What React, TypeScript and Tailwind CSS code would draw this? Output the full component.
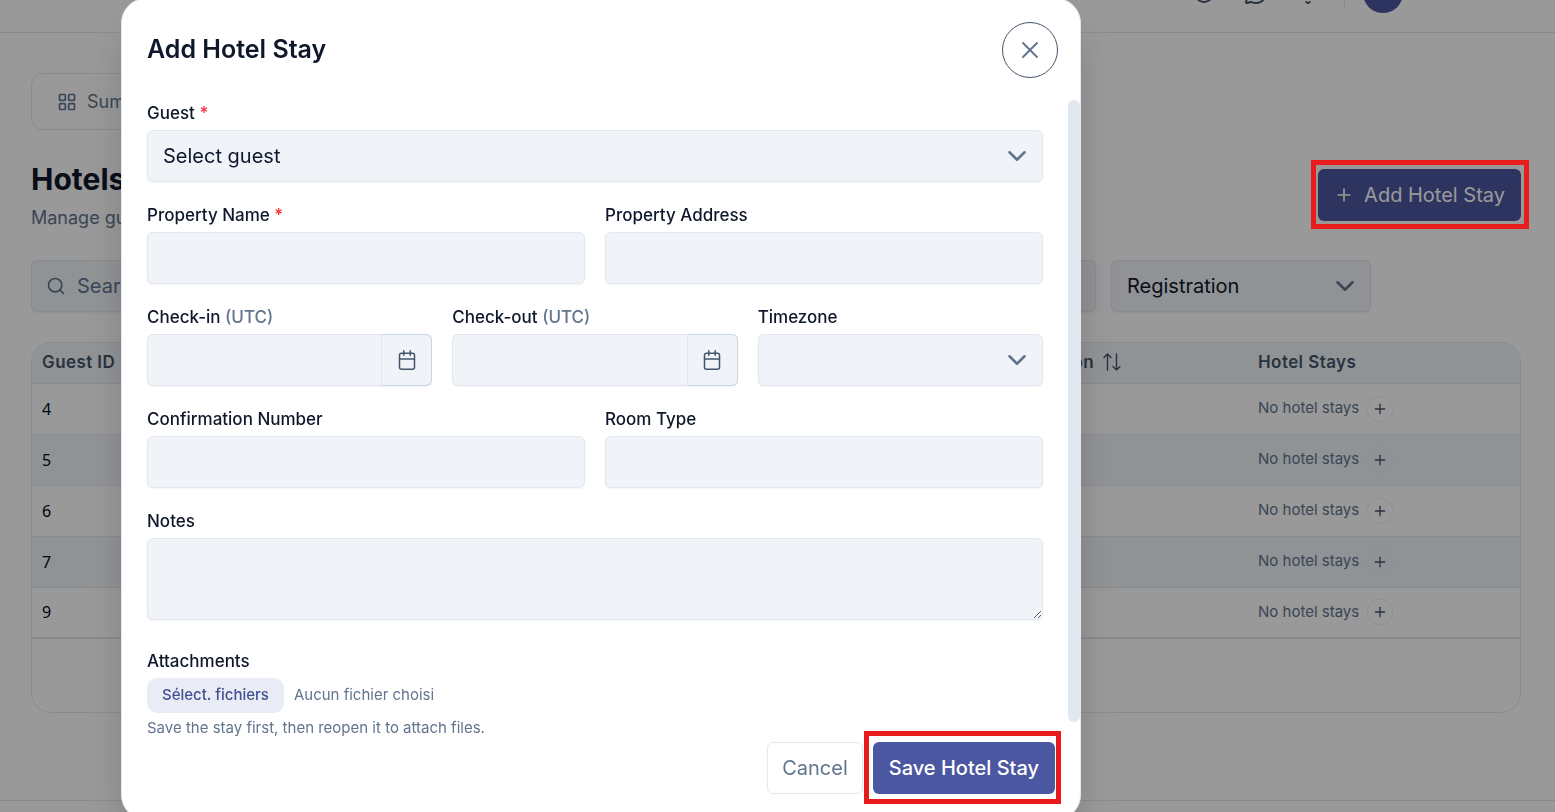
import { useState } from "react";
import type { ReactNode } from "react";
import { Bell, LayoutGrid, MessageCircle, Moon, Plus, Search, X } from "lucide-react";

const guestIds = [4, 5, 6, 7, 9];

const controlClass =
  "w-full rounded-md border border-slate-200 bg-[#f0f3f8] px-[15px] text-xl text-slate-900 shadow-xs outline-none";

function CalendarIcon() {
  return (
    <svg
      className="size-5"
      viewBox="0 0 20 20"
      fill="none"
      stroke="currentColor"
      strokeWidth={1.5}
      strokeLinecap="round"
      strokeLinejoin="round"
      aria-hidden="true"
    >
      <rect x="2.5" y="3.2" width="15" height="16" rx="2" />
      <path d="M6.8 .8v4.4M13.2 .8v4.4M2.5 9h15" />
    </svg>
  );
}

function SortIcon() {
  return (
    <svg
      className="size-5"
      viewBox="0 0 20 20"
      fill="none"
      stroke="currentColor"
      strokeWidth={1.4}
      strokeLinecap="round"
      strokeLinejoin="round"
      aria-hidden="true"
    >
      <path d="M5.5 17V1M2 4.5 5.5 1 9 4.5M14.5 1v16M11 13.500l3.500 3.500 3.500-3.500" />
    </svg>
  );
}

function Field({
  id,
  label,
  required,
  hint,
  children,
}: {
  id: string;
  label: string;
  required?: boolean;
  hint?: string;
  children: ReactNode;
}) {
  return (
    <div className="flex min-w-0 flex-col gap-[3px]">
      <label htmlFor={id} className="text-[17px] leading-[27px] font-medium text-slate-900">
        {label}
        {required && <span className="text-red-500"> *</span>}
        {hint && <span className="text-slate-500"> {hint}</span>}
      </label>
      {children}
    </div>
  );
}

function TextField({ id, label, required }: { id: string; label: string; required?: boolean }) {
  return (
    <Field id={id} label={label} required={required}>
      <input id={id} type="text" className={`${controlClass} h-[52px]`} />
    </Field>
  );
}

function SelectBox({ id, label, options }: { id: string; label?: string; options: string[] }) {
  return (
    <div className="relative">
      <select id={id} aria-label={label} className={`${controlClass} h-[52px] appearance-none`}>
        {options.map((option) => (
          <option key={option}>{option}</option>
        ))}
      </select>
      <svg
        className="pointer-events-none absolute top-4 right-4 size-5 text-slate-500"
        viewBox="0 0 16 16"
        fill="none"
        stroke="currentColor"
        strokeWidth={2}
        strokeLinecap="round"
        strokeLinejoin="round"
        aria-hidden="true"
      >
        <path d="m2 5 6 6 6-6" />
      </svg>
    </div>
  );
}

function DateField({ id, label }: { id: string; label: string }) {
  return (
    <Field id={id} label={label} hint="(UTC)">
      <div className="flex h-[52px] rounded-md bg-[#f0f3f8] shadow-xs">
        <input
          id={id}
          type="text"
          className="min-w-0 flex-1 rounded-l-md border border-r-0 border-slate-200 px-[15px] text-xl outline-none"
        />
        <button
          type="button"
          aria-label={`Pick ${label} date`}
          className="flex w-[51px] items-center justify-center rounded-r-md border border-slate-300 border-l-slate-200 text-slate-600"
        >
          <CalendarIcon />
        </button>
      </div>
    </Field>
  );
}

function HotelsPage({ onAdd }: { onAdd: () => void }) {
  return (
    <div className="min-h-screen bg-white">
      <header className="flex h-[33px] items-end justify-end gap-6 overflow-hidden border-b border-slate-200 pr-[152px] pb-[19px] text-slate-600">
        <div className="flex h-10 items-center gap-7">
          <Moon className="size-6" />
          <MessageCircle className="size-6" />
          <Bell className="size-6" />
        </div>
        <div className="flex h-10 items-center gap-[18px]">
          <span className="h-[30px] w-px bg-slate-200" />
          <span className="size-10 rounded-full bg-[#4b589f]" />
        </div>
      </header>

      <main className="pt-10 pr-[34px] pb-[87px] pl-[31px]">
        <nav className="flex h-[57px] w-[900px] items-center rounded-xl border border-slate-200 px-[25px]">
          <a href="#summary" className="flex items-center gap-2.5 text-lg text-slate-500">
            <LayoutGrid className="size-5" />
            Summary
          </a>
        </nav>

        <div className="mt-[30px] flex items-start justify-between">
          <div>
            <h1 className="text-3xl leading-[38px] font-bold text-slate-900">Hotels</h1>
            <p className="mt-1.5 text-lg leading-7 text-slate-500">Manage guests</p>
          </div>
          <div className="relative mt-[9px]">
            <button
              type="button"
              onClick={onAdd}
              className="flex h-[52px] items-center gap-2.5 rounded-md bg-[#4b589f] px-4 text-xl text-white"
            >
              <Plus className="size-5" />
              Add Hotel Stay
            </button>
            <span className="pointer-events-none absolute -top-[9px] -right-2 -bottom-2 -left-[7px] z-60 border-5 border-[#e81c1c]" />
          </div>
        </div>

        <div className="mt-7 flex gap-[15px]">
          <div className="relative w-[800px]">
            <Search className="absolute top-4 left-[15px] size-5 text-slate-500" aria-hidden="true" />
            <input
              type="search"
              aria-label="Search"
              placeholder="Search"
              className="h-[52px] w-full rounded-md border border-slate-200 bg-slate-100 pl-[45px] text-xl shadow-xs placeholder:text-slate-500"
            />
          </div>
          <div className="w-[250px]">
            <SelectBox id="filter-group" label="Group" options={[""]} />
          </div>
          <div className="w-[260px]">
            <SelectBox id="filter-registration" label="Registration" options={["Registration"]} />
          </div>
        </div>

        <div className="mt-[30px] overflow-hidden rounded-[20px] border border-slate-200 pb-[73px]">
          <table className="w-full table-fixed border-collapse text-left">
            <thead>
              <tr className="h-10 border-b border-slate-200 bg-slate-100 text-[17px] text-slate-600">
                <th className="px-2.5 font-semibold tracking-wide">Guest ID</th>
                <th className="w-[268px] px-2.5 font-semibold tracking-wide">
                  <span className="flex items-center gap-2">
                    Registration
                    <SortIcon />
                  </span>
                </th>
                <th className="w-[272px] px-2.5 font-semibold tracking-wide">Hotel Stays</th>
              </tr>
            </thead>
            <tbody>
              {guestIds.map((id) => (
                <tr
                  key={id}
                  className="h-[51px] border-b border-slate-200 last:border-b-2 even:bg-slate-100"
                >
                  <td className="px-2.5 font-['Noto_Sans'] text-base text-slate-950">{id}</td>
                  <td />
                  <td className="px-2.5">
                    <div className="flex items-center gap-2 text-[15px] text-slate-500">
                      No hotel stays
                      <button
                        type="button"
                        aria-label={`Add stay for guest ${id}`}
                        className="flex size-[26px] items-center justify-center rounded-full border border-dashed border-slate-200 text-slate-600"
                      >
                        <Plus className="size-4" />
                      </button>
                    </div>
                  </td>
                </tr>
              ))}
            </tbody>
          </table>
        </div>
      </main>
      <footer className="h-3 border-t border-slate-200" />
    </div>
  );
}

function HotelStayDialog({ onClose }: { onClose: () => void }) {
  return (
    <div className="fixed inset-0 z-50 overflow-hidden bg-black/40 pl-[121px]">
      <div
        role="dialog"
        aria-modal="true"
        aria-labelledby="dialog-title"
        className="-mt-0.5 w-full max-w-[960px] rounded-[25px] border border-slate-200 bg-white pt-[23px] pb-[25px] shadow-2xl"
      >
        <div className="flex items-center justify-between pr-[22px] pl-[25px]">
          <h2 id="dialog-title" className="text-[25px] font-semibold text-slate-900">
            Add Hotel Stay
          </h2>
          <button
            type="button"
            onClick={onClose}
            aria-label="Close"
            className="flex size-14 items-center justify-center rounded-full border border-slate-600 text-slate-500"
          >
            <X className="size-7" strokeWidth={1.6} />
          </button>
        </div>

        <form onSubmit={(e) => e.preventDefault()}>
          <div className="mt-[22px] flex">
            <div className="flex flex-1 flex-col gap-5 pr-[25px] pl-[25px]">
              <Field id="guest" label="Guest" required>
                <SelectBox id="guest" options={["Select guest"]} />
              </Field>
              <div className="grid grid-cols-2 gap-5">
                <TextField id="property-name" label="Property Name" required />
                <TextField id="property-address" label="Property Address" />
              </div>
              <div className="grid grid-cols-3 gap-5">
                <DateField id="check-in" label="Check-in" />
                <DateField id="check-out" label="Check-out" />
                <Field id="timezone" label="Timezone">
                  <SelectBox id="timezone" options={[""]} />
                </Field>
              </div>
              <div className="grid grid-cols-2 gap-5">
                <TextField id="confirmation" label="Confirmation Number" />
                <TextField id="room-type" label="Room Type" />
              </div>
              <Field id="notes" label="Notes">
                <textarea id="notes" className={`${controlClass} h-[82px] resize-y`} />
              </Field>
              <div className="mt-2">
                <Field id="attachments" label="Attachments">
                  <div className="flex items-center gap-2.5 text-[15px] text-slate-500">
                    <input id="attachments" type="file" multiple className="sr-only" />
                    <button
                      type="button"
                      onClick={() => document.getElementById("attachments")?.click()}
                      className="h-[35px] rounded-[10px] bg-[#eaecf5] px-[15px] font-medium text-[#434f93]"
                    >
                      Sélect. fichiers
                    </button>
                    Aucun fichier choisi
                  </div>
                </Field>
                <p className="mt-1 text-[15px] leading-[22px] text-slate-500">
                  Save the stay first, then reopen it to attach files.
                </p>
              </div>
            </div>
            <div className="mb-[17px] w-3 rounded-full bg-slate-200" />
          </div>

          <div className="mt-[3px] flex justify-end gap-2.5 pr-[25px]">
            <button
              type="button"
              onClick={onClose}
              className="h-[52px] rounded-md border border-slate-200 px-3.5 text-xl text-slate-500"
            >
              Cancel
            </button>
            <div className="relative">
              <button
                type="submit"
                className="h-[52px] rounded-md bg-[#4b57a0] px-4 text-xl font-medium text-white"
              >
                Save Hotel Stay
              </button>
              <span className="pointer-events-none absolute -top-[11px] -right-1.5 -bottom-2.5 -left-[9px] border-5 border-[#e81c1c]" />
            </div>
          </div>
        </form>
      </div>
    </div>
  );
}

export default function App() {
  const [open, setOpen] = useState(true);

  return (
    <div className="font-[Inter,sans-serif]">
      <HotelsPage onAdd={() => setOpen(true)} />
      {open && <HotelStayDialog onClose={() => setOpen(false)} />}
    </div>
  );
}
